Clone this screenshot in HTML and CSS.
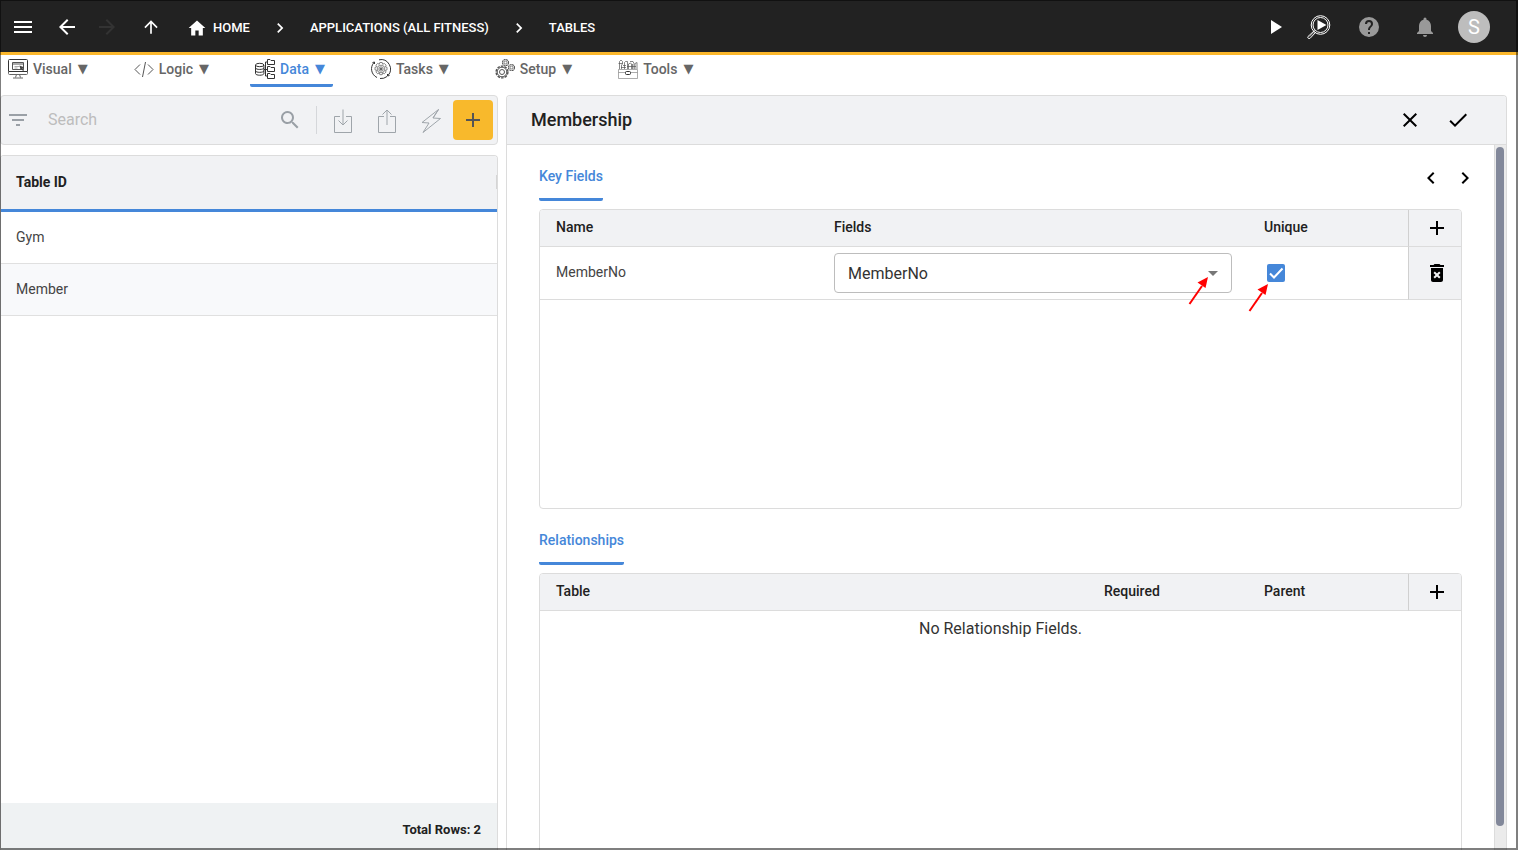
FILE: index.html
```html
<!DOCTYPE html>
<html lang="en">
<head>
<meta charset="utf-8">
<title>Tables</title>
<link rel="stylesheet" href="styles.css">
</head>
<body>
<div class="app">
  <header class="topbar">
    <nav class="history" aria-label="History">
      <button class="icon-btn" aria-label="Menu"><svg class="i24" viewBox="0 0 24 24"><path d="M3 18h18v-2H3zm0-5h18v-2H3zm0-7v2h18V6z"/></svg></button>
      <button class="icon-btn" aria-label="Back"><svg class="i24" viewBox="0 0 24 24"><path d="M20 11H7.830l5.590-5.590L12 4l-8 8 8 8 1.410-1.410L7.830 13H20z"/></svg></button>
      <button class="icon-btn dim" aria-label="Forward" disabled><svg class="i24" viewBox="0 0 24 24"><path d="M12 4l-1.410 1.410L16.170 11H4v2h12.170l-5.580 5.590L12 20l8-8z"/></svg></button>
      <button class="icon-btn up" aria-label="Up"><svg class="i20" viewBox="0 0 24 24"><path d="M4 12l1.410 1.410L11 7.830V20h2V7.830l5.580 5.590L20 12l-8-8z"/></svg></button>
    </nav>
    <nav class="crumbs" aria-label="Breadcrumb">
      <a class="crumb" href="#"><svg class="i20" viewBox="0 0 24 24"><path d="M10 21v-6h4v6h5v-9h3L12 3 2 12h3v9z"/></svg>HOME</a>
      <svg class="i20" viewBox="0 0 24 24"><path d="M10 6L8.590 7.410 13.170 12l-4.580 4.590L10 18l6-6z"/></svg>
      <a class="crumb" href="#">APPLICATIONS (ALL FITNESS)</a>
      <svg class="i20" viewBox="0 0 24 24"><path d="M10 6L8.590 7.410 13.170 12l-4.580 4.590L10 18l6-6z"/></svg>
      <a class="crumb" href="#">TABLES</a>
    </nav>
    <div class="tools">
      <button class="icon-btn" aria-label="Run"><svg class="i24" viewBox="0 0 24 24"><path d="M8 5v14l11-7z"/></svg></button>
      <button class="icon-btn" aria-label="Preview"><svg class="i24" viewBox="0 0 24 24"><g fill="none" stroke="#fff"><circle cx="13.500" cy="10" r="9.300" stroke-width="1"/><circle cx="13.500" cy="10" r="7.500" stroke-width="1"/><path d="M7.500 15.500L1 21.500q-.6 1.200.3 1.800t1.800 0L9 17" stroke-width="1"/><path d="M8.200 16.200l-5.700 5.500" stroke-width=".6"/></g><path d="M10.500 5v10l9-5z"/></svg></button>
      <button class="icon-btn grey help" aria-label="Help"><svg class="i24" viewBox="0 0 24 24"><path d="M12 2a10 10 0 1 0 0 20 10 10 0 0 0 0-20zm1 17h-2v-2h2zm2.070-7.750l-.9.920C13.450 12.900 13 13.500 13 15h-2v-.5c0-1.100.450-2.100 1.170-2.830l1.240-1.260c.370-.360.590-.860.590-1.410a2 2 0 0 0-4 0H8a4 4 0 0 1 8 0c0 .880-.360 1.680-.930 2.250z"/></svg></button>
      <button class="icon-btn grey" aria-label="Notifications"><svg class="i24" viewBox="0 0 24 24"><path d="M12 22c1.100 0 2-.9 2-2h-4a2 2 0 0 0 2 2zm6-6v-5c0-3.070-1.640-5.640-4.500-6.320V4a1.500 1.500 0 0 0-3 0v.680C7.630 5.360 6 7.920 6 11v5l-2 2v1h16v-1z"/></svg></button>
      <button class="avatar" aria-label="Account">S</button>
    </div>
  </header>

  <nav class="menu" aria-label="Sections">
    <a class="item" href="#"><svg class="art" viewBox="0 0 20 20"><path d="M.5 12.500v-11q0-1 1-1h17q1 0 1 1v11z"/><path d="M.5 12.500v2q0 1 1 1h17q1 0 1-1v-2M8.500 15.500l-1 3M11.500 15.500l1 3M5 19h10" stroke="#666"/><path d="M4.500 3.500h11v7h-11zM5 5h10" stroke="#555"/><path d="M6.500 7.500h5M6.500 9h3" stroke="#888" stroke-width=".7"/><path d="M11.500 6.500l4.500 1.700-1.500 1 1.500 2-1 .8-1.500-2-1 1z" fill="#444" stroke="none"/></svg><span>Visual</span><span class="caret">▼</span></a>
    <a class="item" href="#"><svg class="art thin" viewBox="0 0 20 20"><path d="M6 5.500L1 10.500l5 5M14 5.500l5 5-5 5M11.500 3L8.500 18"/></svg><span>Logic</span><span class="caret">▼</span></a>
    <a class="item active" href="#" aria-current="page"><svg class="art" viewBox="0 0 20 20"><ellipse cx="4.700" cy="6" rx="4.200" ry="1.700"/><path d="M.5 6v8.500c0 2.300 8.400 2.300 8.400 0V6M.5 8.800c0 2.200 8.400 2.200 8.400 0M.5 11.700c0 2.200 8.400 2.200 8.400 0M9 10.500h3.500M12.500 3h-2v14h2"/><path d="M12.500 5.500v-5h2.500l1 1h3.500v4zM12.500 12.500v-5h2.500l1 1h3.500v4zM12.500 19.500v-5h2.500l1 1h3.500v4z"/></svg><span>Data</span><span class="caret">▼</span></a>
    <a class="item" href="#"><svg class="art fine" viewBox="0 0 20 20"><path d="M3 3.500A9.500 9.500 0 0 0 6 18.500M8 .8a9.500 9.500 0 0 1 9 15.700M16 17.500a9.500 9.500 0 0 1-7 2M1.500 3.500l2-.5v2M18.500 16.500l-2 .5v-2" stroke="#333" stroke-width="1"/><circle cx="10" cy="10" r="2.200"/><circle cx="10" cy="10" r="3.800"/><path d="M8.800 3.500h2.400l.5 1.800 1.600-.9 1.800 1.800-.9 1.600 1.800.5v2.600l-1.800.5.9 1.600-1.800 1.800-1.600-.9-.5 1.800H8.800l-.5-1.800-1.600.9L4.900 13l.9-1.600-1.800-.5V8.300l1.800-.5-.9-1.600 1.800-1.800 1.600.9z"/><circle cx="10" cy="10" r="1" fill="#555"/></svg><span>Tasks</span><span class="caret">▼</span></a>
    <a class="item" href="#"><svg class="art fine" viewBox="0 0 20 20"><circle cx="7" cy="13" r="5.900" stroke-width="1.400" stroke-dasharray="2.600 1.100"/><circle cx="7" cy="13" r="4.800" stroke-width="1"/><circle cx="7" cy="13" r="2.500" stroke-width="1"/><circle cx="10.500" cy="3.500" r="3" stroke-width="1.200" stroke-dasharray="1.900 .5"/><circle cx="10.500" cy="3.500" r="1.400"/><circle cx="16.500" cy="8.500" r="3" stroke-width="1.200" stroke-dasharray="1.900 .5"/><circle cx="16.500" cy="8.500" r="1.400"/></svg><span>Setup</span><span class="caret">▼</span></a>
    <a class="item" href="#"><svg class="art fine" viewBox="0 0 20 20"><path d="M.5 10.500h19v9H.5zM.5 13.500h7M12.500 13.500h7" stroke="#888"/><rect x="7.500" y="12.500" width="5" height="3" rx="1" stroke="#333" stroke-width="1"/><path d="M1.500 10V2.500L3 1l1.500 1.500V5l-1 1v4M.5 4.500h4M6.500 10V3.500l1-1h2v7.500M5 6.500h3M10.500 10V5l2-1 1 1v5M12 2.500h3l1 2v5.500M17 10V4.500l2-1v6.500M9 7.500h9M3 8.500h5M14.500 5v5"/></svg><span>Tools</span><span class="caret">▼</span></a>
  </nav>

  <main class="workspace">
    <section class="list">
      <div class="card searchbar">
        <svg class="i24 filter" viewBox="0 0 24 24"><path d="M10 18h4v-2h-4zM3 6v2h18V6zm3 7h12v-2H6z"/></svg>
        <input class="search" type="text" placeholder="Search" aria-label="Search tables">
        <svg class="i24 lens" viewBox="0 0 24 24"><path d="M15.500 14h-.790l-.280-.270A6.500 6.500 0 1 0 13.730 14.430l.270.280v.790l5 4.990L20.490 19zm-6 0a4.500 4.500 0 1 1 0-9 4.500 4.500 0 0 1 0 9z"/></svg>
        <span class="divider"></span>
        <button class="line-btn" aria-label="Import"><svg class="i24" viewBox="0 0 24 24"><path d="M9 7.500H3.500v16h17v-16H15M12 .5v15M7.500 11.500l4.500 4.500 4.500-4.500"/></svg></button>
        <button class="line-btn" aria-label="Export"><svg class="i24" viewBox="0 0 24 24"><path d="M9 7.500H3.500v16h17v-16H15M12 16V1M7.500 5.500L12 1l4.500 4.500"/></svg></button>
        <button class="line-btn" aria-label="Actions"><svg class="i24" viewBox="0 0 24 24"><path d="M19.500.5L3 13.500l7 .5-6 9.500 17.500-14-7.500-.5zM19.500.5L14 9"/></svg></button>
        <button class="add" aria-label="Add table"><svg class="i24" viewBox="0 0 24 24"><path d="M19 13h-6v6h-2v-6H5v-2h6V5h2v6h6z"/></svg></button>
      </div>
      <div class="card grid">
        <table class="ids">
          <thead><tr><th scope="col"><div class="head">Table ID<span class="grip"></span></div></th></tr></thead>
          <tbody>
            <tr><td>Gym</td></tr>
            <tr><td>Member</td></tr>
          </tbody>
        </table>
        <footer class="total">Total Rows: 2</footer>
      </div>
    </section>

    <section class="card detail">
      <header class="detail-head">
        <h1>Membership</h1>
        <button class="icon-btn dark" aria-label="Cancel"><svg class="i24" viewBox="0 0 24 24"><path d="M19 6.410L17.590 5 12 10.590 6.410 5 5 6.410 10.590 12 5 17.590 6.410 19 12 13.410 17.590 19 19 17.590 13.410 12z"/></svg></button>
        <button class="icon-btn dark" aria-label="Save"><svg class="i24" viewBox="0 0 24 24"><path d="M9 16.170L4.830 12l-1.420 1.410L9 19 21 7l-1.410-1.410z"/></svg></button>
      </header>
      <div class="detail-body">
        <div class="content">
          <div class="section-head">
            <h2>Key Fields</h2>
            <div class="pager">
              <button class="icon-btn dark" aria-label="Previous"><svg class="i24" viewBox="0 0 24 24"><path d="M15.410 7.410L14 6l-6 6 6 6 1.410-1.410L10.830 12z"/></svg></button>
              <button class="icon-btn dark" aria-label="Next"><svg class="i24" viewBox="0 0 24 24"><path d="M10 6L8.590 7.410 13.170 12l-4.580 4.590L10 18l6-6z"/></svg></button>
            </div>
          </div>
          <div class="box">
            <table class="fields">
              <colgroup><col class="c-name"><col><col class="c-flag"><col class="c-act"></colgroup>
              <thead><tr><th scope="col">Name</th><th scope="col">Fields</th><th scope="col">Unique</th><th class="act"><button class="icon-btn dark" aria-label="Add key"><svg class="i24" viewBox="0 0 24 24"><path d="M19 13h-6v6h-2v-6H5v-2h6V5h2v6h6z"/></svg></button></th></tr></thead>
              <tbody><tr>
                <td class="text">MemberNo</td>
                <td><div class="select">
                  <select aria-label="Fields"><option>MemberNo</option></select>
                  <svg class="drop" viewBox="0 0 10 5"><path d="M0 0h10L5 5z"/></svg>
                  <svg class="pointer" viewBox="0 0 22 28"><path class="shaft" d="M1.500 27L14 9"/><path d="M20 0l-2.500 11L9.500 5.500z"/></svg>
                </div></td>
                <td><div class="tick">
                  <input type="checkbox" aria-label="Unique" checked>
                  <svg class="mark" viewBox="0 0 18 18"><path d="M3 9.500l4 4L15.500 4.500"/></svg>
                  <svg class="pointer" viewBox="0 0 22 28"><path class="shaft" d="M1.500 27L14 9"/><path d="M20 0l-2.500 11L9.500 5.500z"/></svg>
                </div></td>
                <td class="act"><button class="icon-btn dark" aria-label="Delete key"><svg class="i24" viewBox="0 0 24 24"><path fill-rule="evenodd" d="M6 19c0 1.100.9 2 2 2h8c1.100 0 2-.9 2-2V7H6zm2.460-7.120l1.410-1.410L12 12.590l2.120-2.120 1.410 1.410L13.410 14l2.120 2.120-1.410 1.410L12 15.410l-2.120 2.120-1.410-1.410L10.590 14zM15.500 4l-1-1h-5l-1 1H5v2h14V4z"/></svg></button></td>
              </tr></tbody>
            </table>
          </div>
          <div class="section-head"><h2>Relationships</h2></div>
          <div class="box">
            <table class="fields">
              <colgroup><col><col class="c-flag"><col class="c-flag"><col class="c-act"></colgroup>
              <thead><tr><th scope="col">Table</th><th scope="col">Required</th><th scope="col">Parent</th><th class="act"><button class="icon-btn dark" aria-label="Add relationship"><svg class="i24" viewBox="0 0 24 24"><path d="M19 13h-6v6h-2v-6H5v-2h6V5h2v6h6z"/></svg></button></th></tr></thead>
            </table>
            <p class="empty">No Relationship Fields.</p>
          </div>
        </div>
        <div class="track"><div class="thumb"></div></div>
      </div>
    </section>
  </main>
</div>
</body>
</html>
```
FILE: styles.css
```css
* { box-sizing: border-box; }
body { margin: 0; font-family: Roboto, "Liberation Sans", sans-serif; font-size: 14px; color: #212121; background: #fff; overflow: hidden; }
button { border: 0; padding: 0; background: none; font: inherit; color: inherit; cursor: pointer; }
a { color: inherit; text-decoration: none; }
h1, h2, p { margin: 0; }
svg { display: block; flex: none; fill: currentColor; }
.i24 { width: 24px; height: 24px; }
.i20 { width: 20px; height: 20px; }

.app { height: 100vh; display: flex; flex-direction: column; position: relative; }
/* window frame drawn over all content */
.app::after { content: ""; position: absolute; inset: 0; border: solid rgba(0, 0, 0, .5); border-width: 1px 2px 2px 1px; pointer-events: none; }

.topbar { flex: none; height: 55px; display: flex; align-items: center; padding: 0 28px 0 11px; background: #222; color: #fff; border-bottom: 3px solid #fbb72b; }
.icon-btn { display: flex; align-items: center; justify-content: center; min-width: 24px; height: 24px; color: #fff; }
.icon-btn.dim { color: #333; }
.icon-btn.grey { color: #999; }
.icon-btn.dark { color: #000; }
.history { display: flex; gap: 20px; align-items: center; padding-top: 2px; }
.history .dim { margin-left: -4px; }
.crumbs { display: flex; gap: 20px; align-items: center; margin-left: 24px; padding-top: 3px; font-size: 13px; font-weight: 500; }
.crumb { display: flex; align-items: center; gap: 6px; }
.tools { display: flex; align-items: center; gap: 20px; margin-left: auto; padding-top: 2px; }
.help { margin: 0 12px 0 6px; }
.avatar { width: 32px; height: 32px; margin-left: 1px; border-radius: 50%; background: #bdbdbd; color: #fff; font-size: 20px; line-height: 32px; }

.menu { flex: none; height: 40px; display: flex; align-items: flex-start; gap: 33px; padding-left: 3px; color: #666; font-weight: 500; }
.item { display: flex; align-items: center; height: 32px; padding: 0 8px 2px 5px; border-bottom: 3px solid transparent; }
.item.active { color: #4587d9; border-color: #4587d9; border-radius: 2px; }
.caret { margin-left: 6px; font-family: "DejaVu Sans", sans-serif; font-size: 13px; line-height: 16px; }
.art { width: 20px; height: 20px; margin-right: 5px; fill: none; stroke: #333; stroke-width: 1; }
.art.thin { stroke: #555; stroke-width: 1; }
.art.fine { stroke: #555; stroke-width: .7; }

.workspace { flex: 1; min-height: 0; display: flex; gap: 8px; padding-right: 11px; }
.card { border: 1px solid #dcdcdc; border-radius: 4px; background: #fff; overflow: hidden; }
.list { flex: 0 0 498px; display: flex; flex-direction: column; gap: 10px; min-height: 0; }
.searchbar { flex: none; height: 50px; display: flex; align-items: center; padding: 0 4px 0 5px; background: #f1f2f4; }
.filter, .lens { color: #9aa0a6; }
.search { flex: 1; min-width: 0; margin-left: 18px; padding: 0 0 2px; border: 0; outline: 0; background: none; font: 16px Roboto, sans-serif; color: #212121; }
.search::placeholder { color: #bdbdbd; }
.divider { width: 1px; height: 28px; margin: 0 14px; background: #d5d7da; }
.line-btn { margin-right: 20px; padding-top: 2px; color: #9fa5aa; }
.line-btn svg { fill: none; stroke: currentColor; stroke-width: 1; }
.line-btn:nth-of-type(3) { margin-right: 10px; }
.add { width: 40px; height: 40px; border-radius: 4px; background: #f8b92c; color: #555; display: flex; align-items: center; justify-content: center; }

.grid { flex: 1; display: flex; flex-direction: column; border-bottom: 0; border-bottom-left-radius: 0; border-bottom-right-radius: 0; }
table { width: 100%; border-collapse: separate; border-spacing: 0; table-layout: fixed; }
th { text-align: left; }
.ids th { height: 56px; padding: 0 0 2px; background: #f1f2f4; border-bottom: 3px solid #4587d9; }
.head { display: flex; align-items: center; justify-content: space-between; padding-left: 15px; }
.grip { width: 1px; height: 14px; background: #d5d5d5; }
.ids td { height: 52px; padding: 0 15px 2px; color: #444; border-bottom: 1px solid #e0e0e0; }
.ids tr:nth-child(2) td { background: #f8f9fb; }
.total { margin-top: auto; height: 47px; padding: 0 16px; line-height: 54px; text-align: right; font-size: 13px; font-weight: 700; background: #eff2f3; }

.detail { flex: 1; min-width: 0; display: flex; flex-direction: column; border-bottom: 0; border-bottom-left-radius: 0; border-bottom-right-radius: 0; }
.detail-head { flex: none; height: 49px; display: flex; align-items: center; gap: 24px; padding: 0 36px 0 24px; background: #f1f2f4; border-bottom: 1px solid #dcdcdc; }
.detail-head h1 { flex: 1; padding-bottom: 2px; font-size: 18px; font-weight: 500; }
.detail-body { flex: 1; min-height: 0; display: flex; }
.content { flex: 1; min-width: 0; padding: 0 32px; overflow: hidden; }
.section-head { display: flex; justify-content: space-between; align-items: flex-end; height: 56px; margin-bottom: 8px; }
.section-head h2 { height: 36px; padding-top: 3px; line-height: 16px; font-size: 14px; font-weight: 500; color: #4587d9; border-bottom: 3px solid #4587d9; border-radius: 2px; }
.pager { display: flex; gap: 10px; height: 35px; margin-right: -15px; }
.box { height: 300px; border: 1px solid #dcdcdc; border-radius: 4px; overflow: hidden; }
.c-name { width: 278px; }
.c-flag { width: 160px; }
.c-act { width: 53px; }
.fields th { height: 37px; padding: 0 16px 2px; font-weight: 500; color: #212121; background: #f1f2f4; border-bottom: 1px solid #dcdcdc; }
.fields td { height: 53px; padding: 0 16px; color: #444; border-bottom: 1px solid #dcdcdc; }
.fields .text { padding-bottom: 2px; }
.fields .act { padding: 0 12px 0 16px; background: #f1f2f4; border-left: 1px solid #d0d0d0; }
.select, .tick { position: relative; }
.select select { display: block; width: 100%; height: 40px; padding: 0 13px; appearance: none; border: 1px solid #bdbdbd; border-radius: 4px; background: #fff; font: 16px Roboto, sans-serif; color: #333; }
.drop { position: absolute; right: 14px; top: 18px; width: 10px; height: 5px; color: #777; }
.tick { width: 18px; height: 18px; margin-left: 3px; }
.tick input { display: block; width: 18px; height: 18px; margin: 0; appearance: none; border-radius: 2px; background: #4587d9; }
.mark { position: absolute; inset: 0; fill: none; stroke: #fff; stroke-width: 2; pointer-events: none; }
.pointer { position: absolute; width: 22px; height: 28px; color: #f00; pointer-events: none; }
.pointer .shaft { stroke: #f00; stroke-width: 2; }
.select .pointer { right: 22px; top: 24px; }
.tick .pointer { right: 15px; top: 20px; }
.empty { padding-top: 8px; text-align: center; font-size: 16px; line-height: 20px; color: #333; }
.track { flex: 0 0 12px; padding: 2px 1px; background: #ebebeb; border-left: 1px solid #dcdcdc; }
.thumb { width: 8px; height: calc(100% - 22px); border-radius: 4px; background: #82889a; }
```
